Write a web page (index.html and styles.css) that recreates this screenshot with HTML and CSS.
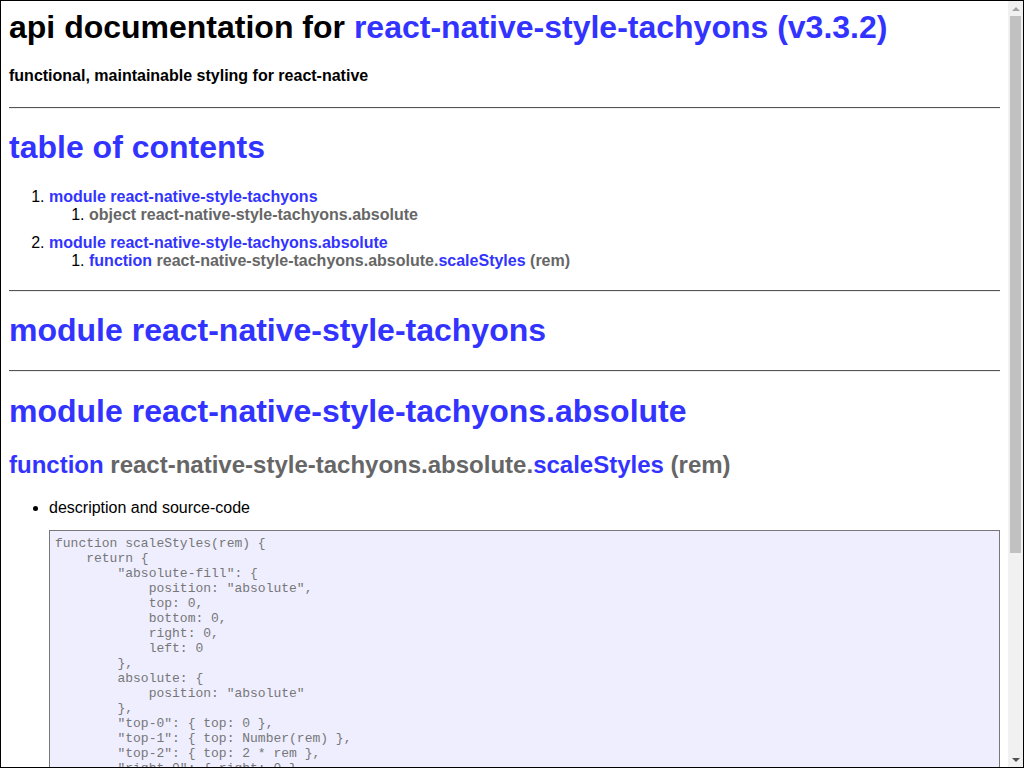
FILE: index.html
```html
<!DOCTYPE html>
<html lang="en">
<head>
<meta charset="utf-8">
<title>api documentation for react-native-style-tachyons (v3.3.2)</title>
<link rel="stylesheet" href="styles.css">
</head>
<body>
<div class="frame">
<div class="viewport">
<div class="apidoc">
<h1 class="title">api documentation for <a href="#">react-native-style-tachyons (v3.3.2)</a></h1>
<h4 class="subtitle">functional, maintainable styling for react-native</h4>

<div class="section">
<h1><a href="#toc">table of contents</a></h1>
<ol class="toc">
<li class="toc-module"><a href="#m1">module react-native-style-tachyons</a>
<ol>
<li><span class="sig">object react-native-style-tachyons.absolute</span></li>
</ol>
</li>
<li class="toc-module"><a href="#m2">module react-native-style-tachyons.absolute</a>
<ol>
<li><a href="#f1">function</a> <span class="sig">react-native-style-tachyons.absolute.</span><a href="#f1">scaleStyles</a> <span class="sig">(rem)</span></li>
</ol>
</li>
</ol>
</div>

<div class="section">
<h1><a href="#m1">module react-native-style-tachyons</a></h1>
</div>

<div class="section">
<h1><a href="#m2">module react-native-style-tachyons.absolute</a></h1>
<h2 class="fn"><a href="#f1">function</a> <span class="sig">react-native-style-tachyons.absolute.</span><a href="#f1">scaleStyles</a> <span class="sig">(rem)</span></h2>
<ul class="desc">
<li>description and source-code
<pre class="code">function scaleStyles(rem) {
    return {
        "absolute-fill": {
            position: "absolute",
            top: 0,
            bottom: 0,
            right: 0,
            left: 0
        },
        absolute: {
            position: "absolute"
        },
        "top-0": { top: 0 },
        "top-1": { top: Number(rem) },
        "top-2": { top: 2 * rem },
        "right-0": { right: 0 },
        "right-1": { right: Number(rem) },
        "right-2": { right: 2 * rem },
        "bottom-0": { bottom: 0 },
        "bottom-1": { bottom: Number(rem) },
        "bottom-2": { bottom: 2 * rem },
        "left-0": { left: 0 },
        "left-1": { left: Number(rem) },
        "left-2": { left: 2 * rem }
    };
}</pre>
</li>
<li>example usage
<pre class="code">n/a</pre>
</li>
</ul>
</div>

<div class="footer">[ this document was created with <a href="#">utility2</a> ]</div>
</div>
</div>
<div class="scrollbar" aria-hidden="true">
<div class="sb-btn sb-up"><span class="arrow-up"></span></div>
<div class="sb-track"><div class="sb-thumb"></div></div>
<div class="sb-btn sb-down"><span class="arrow-down"></span></div>
</div>
</div>
</body>
</html>
```

FILE: styles.css
```css
html, body {
  margin: 0;
  padding: 0;
  height: 100%;
}

.frame {
  box-sizing: border-box;
  height: 100vh;
  border: 1px solid #000;
  display: flex;
  overflow: hidden;
  background: #fff;
}

.viewport {
  flex: 1;
  min-width: 0;
  overflow: hidden;
}

.apidoc {
  padding: 8px;
  font-family: "Liberation Sans", Arial, sans-serif;
  font-size: 16px;
  color: #000;
}

.apidoc a {
  color: #33f;
  font-weight: bold;
  text-decoration: none;
}

.title {
  font-size: 2em;
  margin: 0 0 0.67em;
}

.subtitle {
  font-size: 16px;
  margin: 1.33em 0;
}

.section {
  border-top: 1px solid #555;
  background: linear-gradient(#eee, #eee) no-repeat 0 0 / 100% 1px;
  margin-top: 20px;
}

.section h1 {
  font-size: 2em;
  margin: 0.67em 0;
}

.toc {
  margin: 1em 0;
  padding-left: 40px;
}

.toc ol {
  margin: 0;
  padding-left: 40px;
}

.toc-module {
  margin-top: 10px;
}

.sig {
  color: #666;
  font-weight: bold;
}

.fn {
  font-size: 1.5em;
  margin: 0.83em 0;
}

.desc {
  margin: 1em 0;
  padding-left: 40px;
}

.code {
  background: #eef;
  border: 1px solid;
  color: #777;
  padding: 5px;
  margin: 13px 0;
  font-family: "Liberation Mono", "Courier New", monospace;
  font-size: 13px;
  line-height: 15px;
  white-space: pre-wrap;
}

.footer {
  margin-top: 20px;
  text-align: center;
}

/* scrollbar drawn at the right edge of the frame */
.scrollbar {
  width: 15px;
  flex: none;
  background: #f1f1f1;
  display: flex;
  flex-direction: column;
}

.sb-btn {
  height: 15px;
  flex: none;
  display: flex;
  align-items: center;
  justify-content: center;
}

.arrow-up {
  width: 0;
  height: 0;
  border-left: 4px solid transparent;
  border-right: 4px solid transparent;
  border-bottom: 4px solid #a3a3a3;
}

.arrow-down {
  width: 0;
  height: 0;
  border-left: 4px solid transparent;
  border-right: 4px solid transparent;
  border-top: 4px solid #505050;
}

.sb-track {
  flex: 1;
  padding: 0 2px;
}

.sb-thumb {
  height: 537px;
  background: #c1c1c1;
}
```
